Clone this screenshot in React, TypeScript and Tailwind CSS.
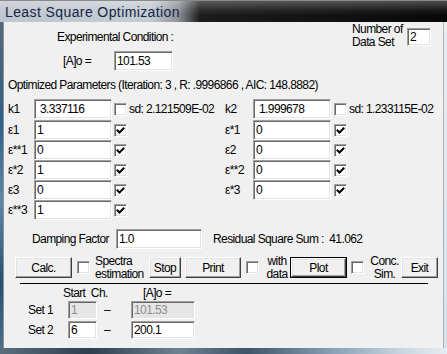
import React from "react";

const sunken =
  "border border-t-[#a0a0a0] border-l-[#a0a0a0] border-r-white border-b-white shadow-[inset_1px_1px_0_#696969,inset_-1px_-1px_0_#e3e3e3]";
const raised =
  "border border-t-white border-l-white border-r-[#404040] border-b-[#404040] shadow-[inset_-1px_-1px_0_#a0a0a0,inset_1px_1px_0_#e3e3e3] bg-[#f0f0f0]";

function Field({ value, className = "", disabled = false, pad = "pl-[2px]" }: { value: string; className?: string; disabled?: boolean; pad?: string }) {
  return (
    <div
      className={`${sunken} ${className} ${pad} flex items-center shrink-0 leading-none ${
        disabled ? "bg-[#e6e6e6] text-[#8d8d8d]" : "bg-white text-black"
      }`}
    >
      {value}
    </div>
  );
}

function Check({ on = false }: { on?: boolean }) {
  return (
    <div className={`${sunken} bg-white w-[13px] h-[13px] shrink-0 relative`}>
      {on && (
        <svg width="9" height="9" viewBox="0 0 9 9" className="absolute left-[1px] top-[2px]">
          <path d="M1.5 3.5 L3.5 5.5 L7.5 1.5" stroke="black" strokeWidth="2" fill="none" strokeLinecap="square" />
        </svg>
      )}
    </div>
  );
}

function Btn({ label, w, def = false }: { label: string; w: string; def?: boolean }) {
  const inner = (
    <div className={`${raised} ${def ? "w-full" : w} h-full flex items-center justify-center`}>{label}</div>
  );
  if (def) return <div className={`${w} h-[21px] border border-black shrink-0`}>{inner}</div>;
  return <div className={`${w} h-[21px] shrink-0`}>{inner}</div>;
}

type Param = { label: string; value: string; sd?: string; on?: boolean };

const left: Param[] = [
  { label: "k1", value: "3.337116", sd: "sd: 2.121509E-02" },
  { label: "ε1", value: "1", on: true },
  { label: "ε**1", value: "0", on: true },
  { label: "ε*2", value: "1", on: true },
  { label: "ε3", value: "0", on: true },
  { label: "ε**3", value: "1", on: true },
];

const right: Param[] = [
  { label: "k2", value: "1.999678", sd: "sd: 1.233115E-02" },
  { label: "ε*1", value: "0", on: true },
  { label: "ε2", value: "0", on: true },
  { label: "ε**2", value: "0", on: true },
  { label: "ε*3", value: "0", on: true },
];

function ParamCol({ rows, labelW, gap }: { rows: Param[]; labelW: string; gap: string }) {
  return (
    <div className="flex flex-col w-[217px]">
      {rows.map((r, i) => (
        <div key={r.label} className={`flex items-center h-[20px] ${i === 0 ? "mb-[1px]" : ""}`}>
          <div className={`${labelW} shrink-0`}>{r.label}</div>
          <Field value={r.value} className="w-[78px] h-[20px]" pad={r.sd ? "pl-[5px]" : "pl-[2px]"} />
          <div className={gap}>
            <Check on={r.on} />
          </div>
          {r.sd && <div className="ml-[2px] whitespace-nowrap">{r.sd}</div>}
        </div>
      ))}
    </div>
  );
}

export default function App() {
  return (
    <div className="w-[447px] h-[354px] flex flex-col overflow-hidden text-[12px] tracking-[-0.6px] text-black font-['Liberation_Sans',Arial,sans-serif] bg-[#1d2b38]">
      {/* title bar */}
      <div className="h-[22px] shrink-0 flex items-center pl-[5px] bg-[image:linear-gradient(180deg,rgba(255,255,255,0.28)_0px,rgba(255,255,255,0.08)_9px,rgba(0,0,0,0)_14px),linear-gradient(90deg,#bfc6cd_0px,#c4cbd1_150px,#8e9397_178px,#1c1c1c_200px,#080808_100%)] border-t border-[#8a8a8a]">
        <span className="text-[14px] tracking-[0.4px] text-[#14264a] leading-none">Least Square Optimization</span>
      </div>

      <div className="flex h-[326px] shrink-0">
        <div className="w-[4px] bg-[linear-gradient(180deg,#56697a,#2f5f86_30%,#5d88a6_55%,#27506f_80%,#4c6f8b)] border-r border-[#8b939a]" />

        {/* client */}
        <div className="w-[439px] bg-[#f0f0f0] flex flex-col">
          <div className="h-[29px] flex">
            <div className="pl-[53px] pt-[8px] leading-[14px]">Experimental Condition :</div>
            <div className="ml-auto flex">
              <div className="w-[55px] pt-[1px] leading-[13px]">
                Number of
                <br />
                Data Set
              </div>
              <Field value="2" className="w-[24px] h-[18px] mt-[6px] mr-[12px]" />
            </div>
          </div>

          <div className="h-[20px] flex items-center pl-[59px]">
            <div className="w-[51px]">[A]o =</div>
            <Field value="101.53" className="w-[59px] h-[20px]" />
          </div>

          <div className="h-[28px] flex items-center pl-[4px] whitespace-nowrap">
            Optimized Parameters (Iteration: 3 , R: .9996866 , AIC: 148.8882)
          </div>

          <div className="flex pl-[4px]">
            <ParamCol rows={left} labelW="w-[26px]" gap="ml-[2px]" />
            <ParamCol rows={right} labelW="w-[28px]" gap="ml-[3px]" />
          </div>

          <div className="mt-[9px] h-[20px] flex items-center pl-[28px]">
            <div className="w-[84px]">Damping Factor</div>
            <Field value="1.0" className="w-[86px] h-[20px]" />
            <div className="ml-[11px] whitespace-pre">Residual Square Sum :  41.062</div>
          </div>

          <div className="mt-[8px] h-[21px] flex items-center pl-[11px]">
            <Btn label="Calc." w="w-[57px]" />
            <div className="ml-[5px]">
              <Check />
            </div>
            <div className="ml-[5px] w-[54px] leading-[13px]">
              Spectra
              <br />
              estimation
            </div>
            <Btn label="Stop" w="w-[32px]" />
            <div className="ml-[4px]">
              <Btn label="Print" w="w-[56px]" />
            </div>
            <div className="ml-[5px]">
              <Check />
            </div>
            <div className="ml-[5px] w-[26px] leading-[13px] text-center">
              with
              <br />
              data
            </div>
            <Btn label="Plot" w="w-[57px]" def />
            <div className="ml-[4px]">
              <Check />
            </div>
            <div className="ml-[4px] w-[33px] leading-[13px] text-center">
              Conc.
              <br />
              Sim.
            </div>
            <Btn label="Exit" w="w-[37px]" />
          </div>

          <div className="mt-[5px] ml-[16px] w-[408px] h-px bg-black" />

          <div className="h-[17px] flex items-center pl-[59px]">
            <div className="w-[80px] whitespace-pre">Start  Ch.</div>
            <div>[A]o =</div>
          </div>

          {[
            { label: "Set 1", ch: "1", a: "101.53", dis: true },
            { label: "Set 2", ch: "6", a: "200.1", dis: false },
          ].map((s, i) => (
            <div key={s.label} className={`h-[18px] flex items-center pl-[24px] ${i ? "mt-[2px]" : ""}`}>
              <div className="w-[40px]">{s.label}</div>
              <Field value={s.ch} disabled={s.dis} className="w-[29px] h-[18px]" />
              <div className="ml-[7px] w-[27px]">–</div>
              <Field value={s.a} disabled={s.dis} className="w-[64px] h-[18px]" />
            </div>
          ))}
        </div>

        <div className="w-[4px] bg-[linear-gradient(180deg,#e9eef2,#d7e2ea)] border-l border-[#a9b2b9]" />
      </div>

      <div className="h-[6px] shrink-0 bg-[linear-gradient(90deg,#5a6e80,#2d3e4e_20%,#6e8294_40%,#3d5366_55%,#8aa3b8_75%,#c9d6e0_90%,#e6edf2)]" />
    </div>
  );
}
